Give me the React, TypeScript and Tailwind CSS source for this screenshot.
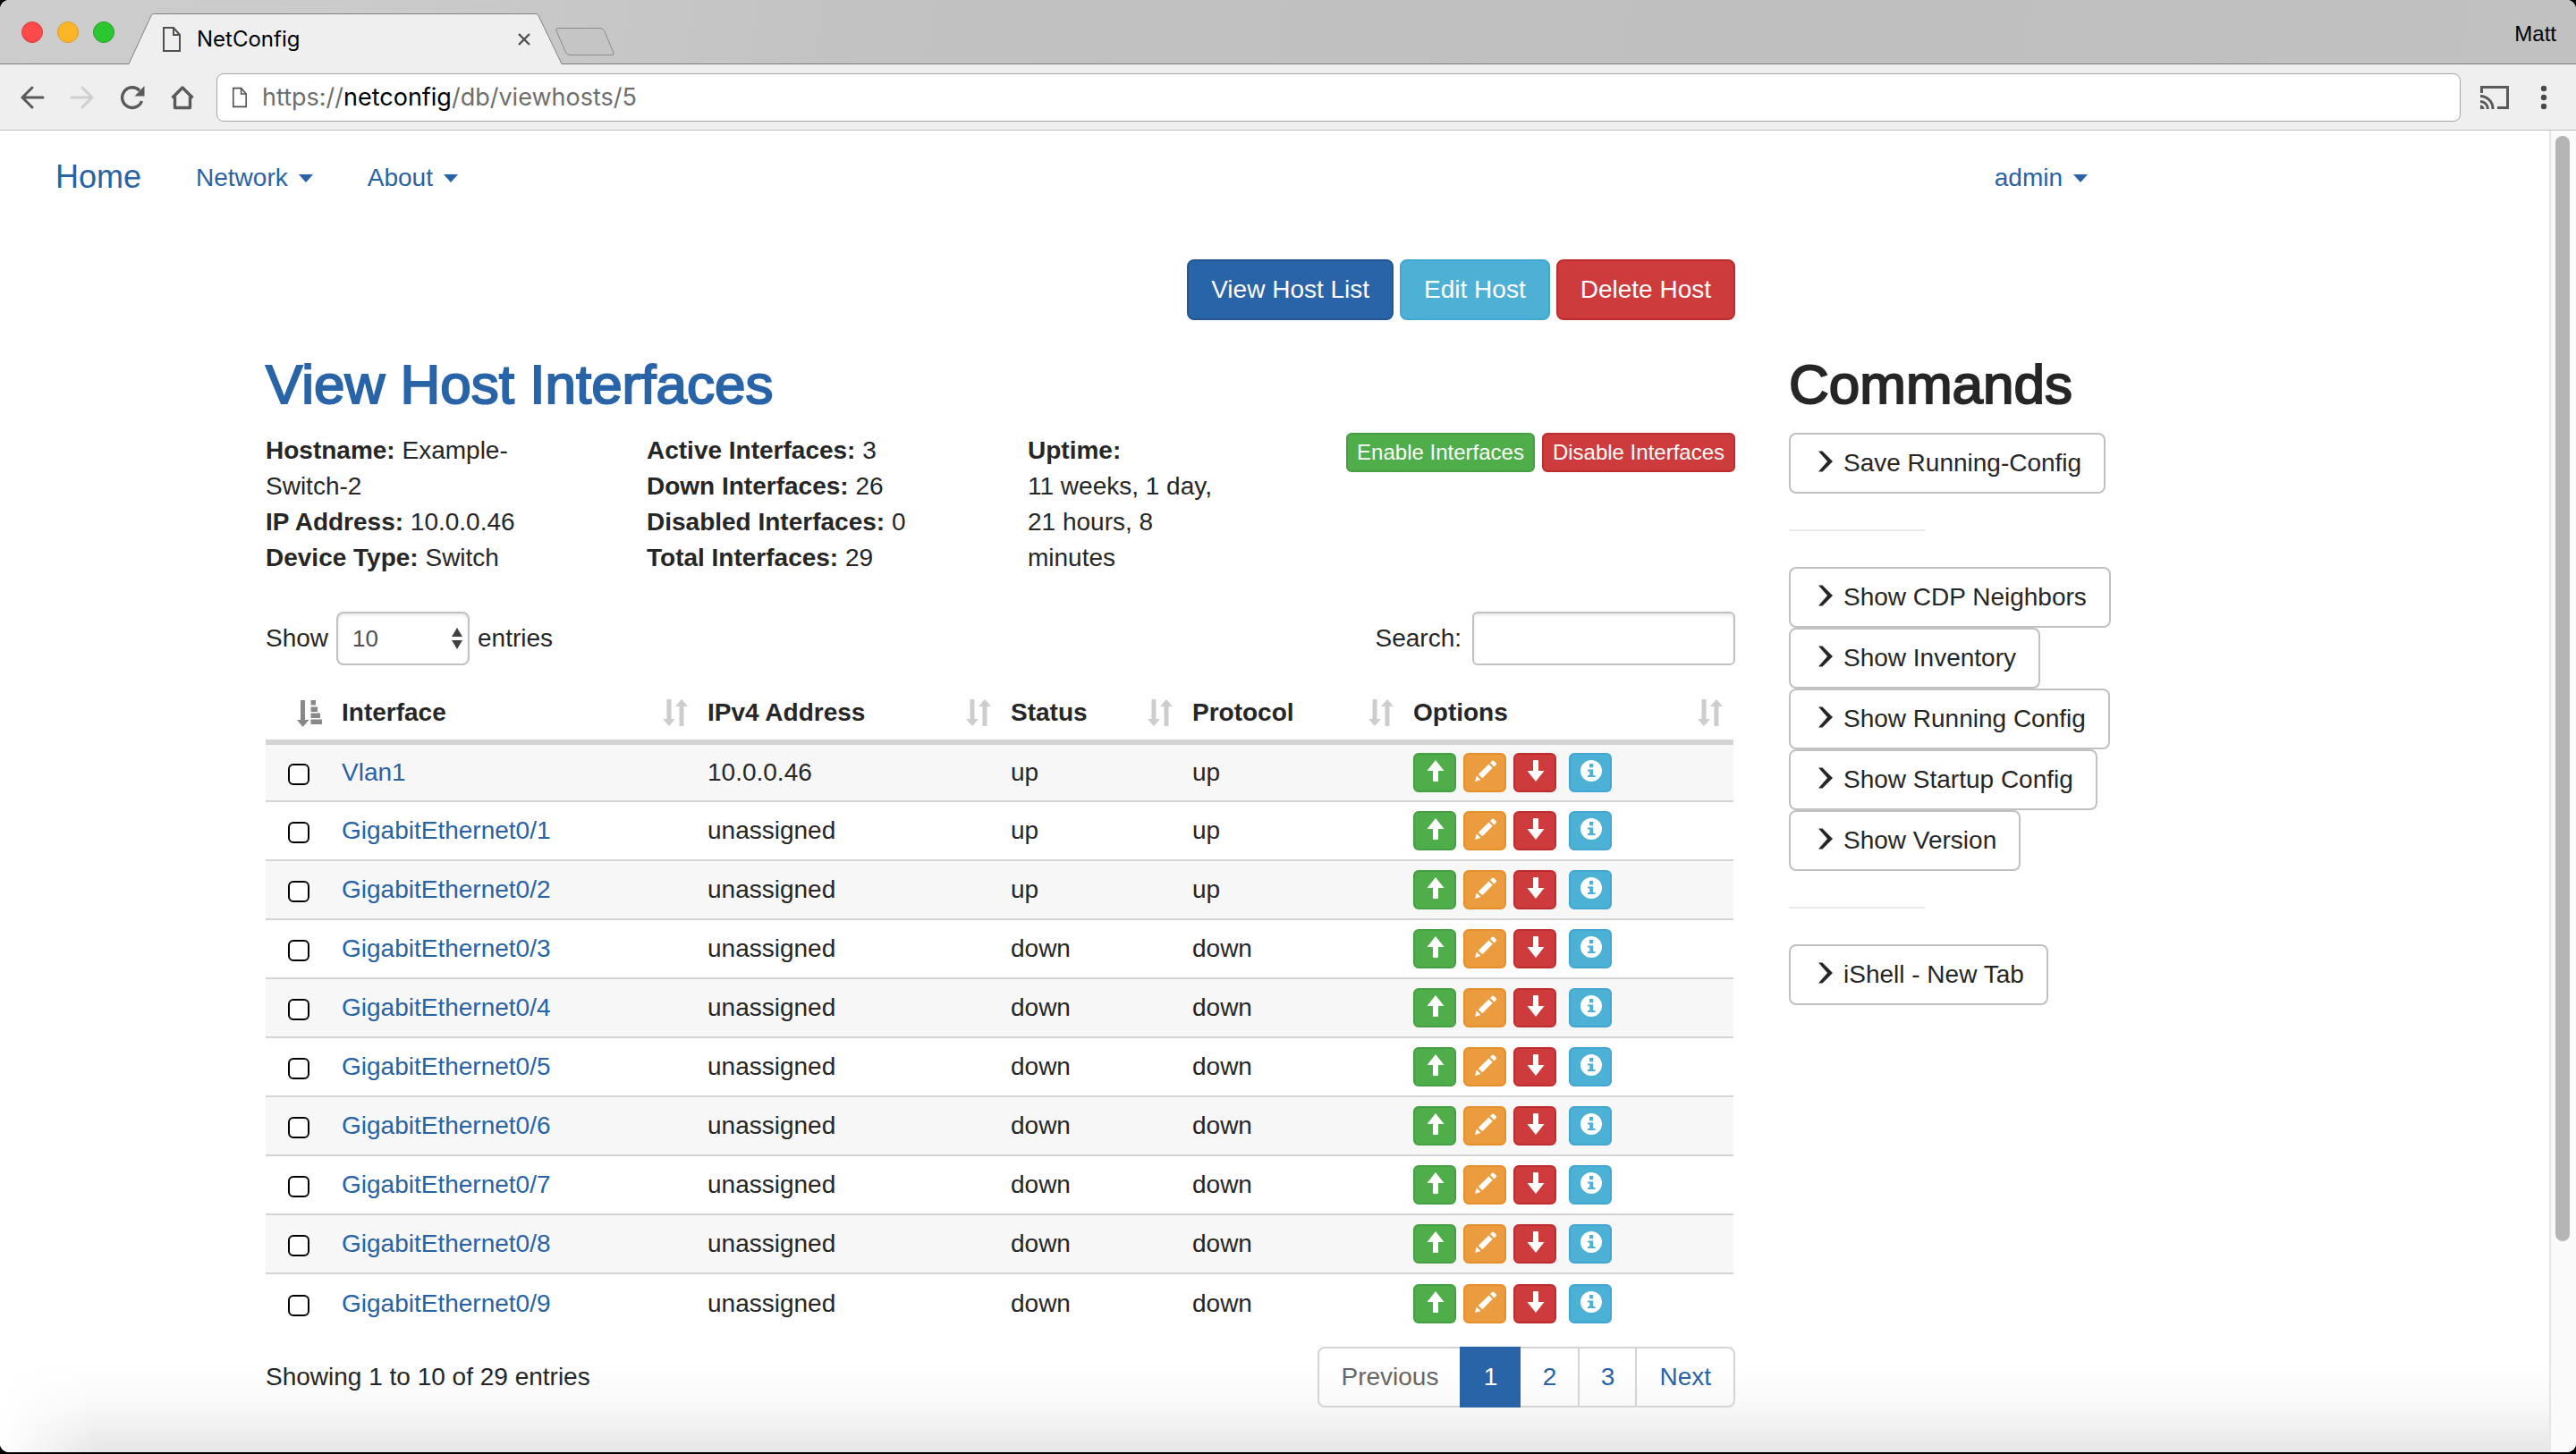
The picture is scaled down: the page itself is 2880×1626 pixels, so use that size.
import React from "react";

const bodyFont = "font-['Liberation_Sans',Arial,sans-serif]";
const chromeFont = "font-['Inter',sans-serif]";

function PageIcon({ className }: { className: string }) {
  return (
    <svg viewBox="0 0 20 28" className={className} fill="none" stroke="#505050" strokeWidth="2" aria-hidden="true">
      <path d="M1 1h11l7 8v18H1z" />
      <path d="M12 1v8h7" />
    </svg>
  );
}

function TitleBar() {
  return (
    <header className="flex h-[72px] shrink-0 items-end bg-[linear-gradient(100deg,#cdcdcd_0%,#cbcbcb_14%,#c2c2c2_34%,#bfbfbf_70%,#c1c1c1_100%)] shadow-[inset_0_-1px_0_#7c7c7c]">
      <div className="flex w-[144px] shrink-0 gap-4 self-start pt-6 pl-6">
        <button aria-label="Close window" className="size-6 rounded-full border border-[#df3b3d] bg-[#fc4a4a]" />
        <button aria-label="Minimize window" className="size-6 rounded-full border border-[#d79a29] bg-[#fdb528]" />
        <button aria-label="Zoom window" className="size-6 rounded-full border border-[#25a02a] bg-[#2bc732]" />
      </div>
      <div className="relative flex h-[57px] w-[484px] shrink-0 items-center pr-[35px] pl-[38px]">
        <svg viewBox="0 0 484 57" className="absolute inset-0 size-full" aria-hidden="true">
          <path d="M0 56.5 25 2.5Q26 .5 28 .5H455Q457 .5 458 2.5L484 56.5V57H0Z" fill="#efefef" />
          <path d="M0 56.5 25 2.5Q26 .5 28 .5H455Q457 .5 458 2.5L484 56.5" fill="none" stroke="#828282" />
        </svg>
        <PageIcon className="relative h-7 w-5" />
        <span className={"relative flex-1 pl-[18px] text-[24px] leading-7 text-black " + chromeFont}>NetConfig</span>
        <button aria-label="Close tab" className="relative">
          <svg viewBox="0 0 14 14" className="size-[14px]" stroke="#505050" strokeWidth="2.4" aria-hidden="true">
            <path d="M1 1l12 12M13 1 1 13" />
          </svg>
        </button>
      </div>
      <button aria-label="New tab" className="mb-[9px] -ml-[7px]">
        <svg viewBox="0 0 66 32" className="h-8 w-[66px]" fill="#c5c5c5" stroke="#8b8b8b" aria-hidden="true">
          <path d="M3 .5H50Q53 .5 54.500 3.500L65 28Q66 30.500 63 30.500H16Q13 30.500 11.500 27.500L1 3.500Q0 .5 3 .5Z" />
        </svg>
      </button>
      <span className={"ml-auto self-start pt-5 pr-[22px] text-[24px] leading-9 text-black " + bodyFont}>Matt</span>
    </header>
  );
}

function Toolbar() {
  return (
    <div className="flex h-[74px] shrink-0 items-center border-b border-[#c2c2c2] bg-[#efefef] pr-[29px] pl-[22px]">
      <div className="flex w-[220px] shrink-0 items-center gap-7">
        <button aria-label="Back">
          <svg viewBox="0 0 28 28" className="size-7" fill="none" stroke="#5a5a5a" strokeWidth="3" strokeLinecap="round" aria-hidden="true">
            <path d="M26 14H3M14 3 3 14l11 11" />
          </svg>
        </button>
        <button aria-label="Forward">
          <svg viewBox="0 0 28 28" className="size-7" fill="none" stroke="#cfcfcf" strokeWidth="3" strokeLinecap="round" aria-hidden="true">
            <path d="M2 14h23M14 3l11 11-11 11" />
          </svg>
        </button>
        <button aria-label="Reload">
          <svg viewBox="0 0 28 28" className="size-7" fill="none" stroke="#5a5a5a" strokeWidth="3.4" aria-hidden="true">
            <path d="M24.500 18A11.300 11.300 0 1 1 22 6.200" />
            <path d="M27.500 1v11.500H16.500z" fill="#5a5a5a" stroke="none" />
          </svg>
        </button>
        <button aria-label="Home page">
          <svg viewBox="0 0 28 28" className="size-7" fill="none" stroke="#5a5a5a" strokeWidth="3.400" strokeLinejoin="round" aria-hidden="true">
            <path d="M2.500 14.500 14 3l11.500 11.500M5.500 13v12.500h17V13" />
          </svg>
        </button>
      </div>
      <div className="flex h-[54px] min-w-0 flex-1 items-center rounded-lg border border-[#a6a6a6] bg-white pl-[17px]">
        <PageIcon className="h-6 w-4" />
        <a href="#address" className={"pl-[17px] text-[27px] leading-9 text-[#6e6e6e] " + chromeFont}>
          https://<span className="text-black">netconfig</span>/db/viewhosts/5
        </a>
      </div>
      <button aria-label="Cast" className="ml-[21px]">
        <svg viewBox="0 0 34 28" className="h-7 w-[34px]" fill="none" stroke="#5a5a5a" strokeWidth="3" aria-hidden="true">
          <path d="M2.500 9V2.500h29v23H20" />
          <path d="M1 12.500A14 14 0 0 1 15 27M1 18.500A8.500 8.500 0 0 1 9.500 27" />
          <path d="M1 22.500A4.500 4.500 0 0 1 5.500 27H1z" fill="#5a5a5a" stroke="none" />
        </svg>
      </button>
      <button aria-label="Browser menu" className="ml-[31px]">
        <svg viewBox="0 0 14 28" className="h-7 w-[14px]" fill="#4a4a4a" aria-hidden="true">
          <circle cx="7" cy="4" r="3.200" />
          <circle cx="7" cy="14" r="3.200" />
          <circle cx="7" cy="24" r="3.200" />
        </svg>
      </button>
    </div>
  );
}

function NavMenu({ label }: { label: string }) {
  return (
    <button className="flex items-center gap-3 pt-0.5 leading-10 text-[#2863a6]">
      {label}
      <svg viewBox="0 0 16 9" className="h-[9px] w-4" fill="currentColor" aria-hidden="true">
        <path d="M0 0h16L8 9z" />
      </svg>
    </button>
  );
}

function UnsortedIcon() {
  return (
    <svg viewBox="0 0 28 30" className="h-[30px] w-7 shrink-0" fill="#cdcdcd" aria-hidden="true">
      <path d="M4.500 0h5v22H14L7 30 0 22h4.500z" />
      <path d="M18.500 30h5V8H28L21 0l-7 8h4.500z" />
    </svg>
  );
}

function SortedIcon() {
  return (
    <svg viewBox="0 0 28 30" className="h-[30px] w-7 shrink-0" fill="#888" aria-hidden="true">
      <path d="M4 0h5v22h4.500L6.500 30 0 22h4z" />
      <path d="M15.500 0H21v5.500h-5.500zM15.500 7.500H23V13h-7.500zM15.500 14.500H26V20H15.500zM15.500 21.500H28v5.500H15.500z" />
    </svg>
  );
}

const glyphs: Record<string, React.ReactNode> = {
  up: <path d="M12 0l9.500 12h-6.500v11q0 1-1 1h-4q-1 0-1-1V12H2.500z" />,
  down: <path d="M12 24l9.500-12h-6.500V1q0-1-1-1h-4q-1 0-1 1v11H2.500z" />,
  edit: (
    <path d="M0 24l1.800-6.500L6.500 22zM3.800 16 15.500 4.500l4.200 4.200L8.300 20.300zM17 3l2-2q1-1 2.200 0l2.300 2.300q1 1 0 2.200l-2 2z" />
  ),
  info: (
    <path
      fillRule="evenodd"
      d="M12 0a12 12 0 1 0 0 24 12 12 0 0 0 0-24zM10 4h4.200v4.200H10zM8 10.500h6.200v6.500H16.500v2H8v-2h2.200v-4.500H8z"
    />
  ),
};

function OptionButton({ glyph, label, color }: { glyph: string; label: string; color: string }) {
  return (
    <button aria-label={label} className={"flex h-11 w-12 items-start justify-center rounded-md border-2 pt-1.5 pl-0.5 text-white " + color}>
      <svg viewBox="0 0 24 24" className="size-6" fill="currentColor" aria-hidden="true">
        {glyphs[glyph]}
      </svg>
    </button>
  );
}

const green = "border-[#469f43] bg-[#4fae4a]";
const orange = "border-[#e6902b] bg-[#ea9c3e]";
const red = "border-[#bd2d30] bg-[#cd3b3c]";
const blue = "border-[#235692] bg-[#2864a7]";
const cyan = "border-[#41a7d0] bg-[#4db1d6]";

const rows = [
  ["Vlan1", "10.0.0.46", "up"],
  ["GigabitEthernet0/1", "unassigned", "up"],
  ["GigabitEthernet0/2", "unassigned", "up"],
  ["GigabitEthernet0/3", "unassigned", "down"],
  ["GigabitEthernet0/4", "unassigned", "down"],
  ["GigabitEthernet0/5", "unassigned", "down"],
  ["GigabitEthernet0/6", "unassigned", "down"],
  ["GigabitEthernet0/7", "unassigned", "down"],
  ["GigabitEthernet0/8", "unassigned", "down"],
  ["GigabitEthernet0/9", "unassigned", "down"],
];

function Fact({ label, value }: { label: string; value: React.ReactNode }) {
  return (
    <p>
      <b>{label}</b> {value}
    </p>
  );
}

function InterfaceTable() {
  return (
    <div className="pt-4 pr-0.5">
      <table className="w-full table-fixed border-collapse text-left">
        <colgroup>
          <col className="w-[69px]" />
          <col />
          <col className="w-[339px]" />
          <col className="w-[203px]" />
          <col className="w-[247px]" />
          <col className="w-[374px]" />
        </colgroup>
        <thead>
          <tr className="h-[70px] border-b-[6px] border-[#d4d4d4]">
            <th className="pt-2 pr-1.5">
              <div className="flex justify-end">
                <SortedIcon />
              </div>
            </th>
            {["Interface", "IPv4 Address", "Status", "Protocol", "Options"].map((name) => (
              <th key={name} className="pt-1.5 pr-1.5 pl-4 last:pr-3">
                <div className="flex items-center justify-between">
                  {name}
                  <UnsortedIcon />
                </div>
              </th>
            ))}
          </tr>
        </thead>
        <tbody>
          {rows.map(([name, address, state]) => (
            <tr key={name} className="h-[66px] border-b-2 border-[#d4d4d4] odd:bg-[#f7f7f7] last:border-b-0">
              <td className="pt-1 pl-[25px]">
                <input
                  type="checkbox"
                  aria-label={"Select " + name}
                  className="block size-6 appearance-none rounded-md border-2 border-black bg-white"
                />
              </td>
              <td className="pl-4">
                <a href="#interface" className="text-[#2863a6]">
                  {name}
                </a>
              </td>
              <td className="pl-4">{address}</td>
              <td className="pl-4">{state}</td>
              <td className="pl-4">{state}</td>
              <td className="pl-4">
                <div className="flex gap-2">
                  <OptionButton glyph="up" label={"Enable " + name} color={green} />
                  <OptionButton glyph="edit" label={"Edit " + name} color={orange} />
                  <OptionButton glyph="down" label={"Disable " + name} color={red} />
                  <div className="pl-1.5">
                    <OptionButton glyph="info" label={"Details of " + name} color={cyan} />
                  </div>
                </div>
              </td>
            </tr>
          ))}
        </tbody>
      </table>
    </div>
  );
}

function CommandButton({ label }: { label: string }) {
  return (
    <button className="flex h-[68px] items-center rounded-lg border-2 border-[#c1c1c1] bg-white pr-[25px] pl-[31px] whitespace-nowrap">
      <svg viewBox="0 0 16 24" className="mr-3 mb-1 h-6 w-4" fill="currentColor" aria-hidden="true">
        <path d="M0 .5h4.500L16 12 4.500 23.500H0L10 12z" />
      </svg>
      {label}
    </button>
  );
}

const bigButton = "h-[68px] rounded-lg border-2 px-[25px] text-white ";
const smallButton = "h-11 rounded-md border-2 px-2.5 text-[24px] leading-9 text-white ";

export default function App() {
  return (
    <div className="flex min-h-screen flex-col bg-black pb-0.5">
      <div className={"flex flex-1 flex-col overflow-hidden rounded-[10px] bg-white text-[28px] leading-10 text-[#262626] " + bodyFont}>
        <TitleBar />
        <Toolbar />
        <div className="flex flex-1">
          <div className="flex-1 bg-[linear-gradient(to_right,white_0px,transparent_110px),linear-gradient(to_top,#e6e6e6_0px,#f8f8f8_50px,white_100px)] bg-no-repeat">
            <nav className="flex h-[104px] items-center pr-[516px] pl-[62px]">
              <a href="#home" className="pr-[61px] text-[36px] text-[#2863a6]">
                Home
              </a>
              <NavMenu label="Network" />
              <div className="pl-[61px]">
                <NavMenu label="About" />
              </div>
              <div className="ml-auto">
                <NavMenu label="admin" />
              </div>
            </nav>
            <div className="flex pt-10 pl-[297px]">
              <main className="max-w-[1643px] flex-1">
                <div className="flex justify-end gap-[7px]">
                  <button className={bigButton + blue}>View Host List</button>
                  <button className={bigButton + cyan}>Edit Host</button>
                  <button className={bigButton + red}>Delete Host</button>
                </div>
                <h1 className="pt-[38px] text-[62px] leading-[68px] text-[#2864a7] [-webkit-text-stroke:2px_#2864a7]">
                  View Host Interfaces
                </h1>
                <div className="flex pt-5">
                  <div className="w-[426px] pr-[120px]">
                    <Fact
                      label="Hostname:"
                      value={
                        <>
                          Example-
                          <wbr />
                          Switch-2
                        </>
                      }
                    />
                    <Fact label="IP Address:" value="10.0.0.46" />
                    <Fact label="Device Type:" value="Switch" />
                  </div>
                  <div className="w-[426px]">
                    <Fact label="Active Interfaces:" value="3" />
                    <Fact label="Down Interfaces:" value="26" />
                    <Fact label="Disabled Interfaces:" value="0" />
                    <Fact label="Total Interfaces:" value="29" />
                  </div>
                  <div className="w-[225px]">
                    <b className="block">Uptime:</b>
                    11 weeks, 1 day, 21 hours, 8 minutes
                  </div>
                  <div className="ml-auto flex gap-2">
                    <button className={smallButton + green}>Enable Interfaces</button>
                    <button className={smallButton + red}>Disable Interfaces</button>
                  </div>
                </div>
                <div className="flex items-center justify-between pt-10">
                  <div className="flex items-center gap-[9px]">
                    <label htmlFor="page-size">Show</label>
                    <div className="relative">
                      <select
                        id="page-size"
                        className="block h-[60px] w-[149px] appearance-none rounded-lg border-2 border-[#c1c1c1] bg-white pl-4 text-[26px] text-[#505050] shadow-[inset_0_2px_3px_#e6e6e6]"
                      >
                        <option>10</option>
                        <option>25</option>
                      </select>
                      <svg viewBox="0 0 12 24" className="pointer-events-none absolute top-[18px] right-2 h-6 w-3" fill="#404040" aria-hidden="true">
                        <path d="M0 10 6 0l6 10zM0 14h12L6 24z" />
                      </svg>
                    </div>
                    <label htmlFor="page-size">entries</label>
                  </div>
                  <div className="flex items-center gap-3">
                    <label htmlFor="search">Search:</label>
                    <input
                      id="search"
                      type="text"
                      className="h-[60px] w-[294px] rounded-md border-2 border-[#c1c1c1] bg-white px-4 shadow-[inset_0_2px_3px_#e6e6e6]"
                    />
                  </div>
                </div>
                <InterfaceTable />
                <div className="flex items-center justify-between pt-4">
                  <p>Showing 1 to 10 of 29 entries</p>
                  <div className="flex h-[68px] rounded-lg border-2 border-[#d4d4d4] text-[#2863a6]">
                    <button className="px-6 text-[#676767]">Previous</button>
                    <button className="-my-0.5 w-[68px] bg-[#2864a7] text-white">1</button>
                    <button className="w-16">2</button>
                    <button className="w-[66px] border-x-2 border-[#d4d4d4]">3</button>
                    <button className="px-[25px]">Next</button>
                  </div>
                </div>
              </main>
              <aside className="flex w-[500px] shrink-0 flex-col items-start pt-[106px] pl-[60px]">
                <h2 className="pb-5 text-[62px] leading-[68px] [-webkit-text-stroke:2px_#262626]">Commands</h2>
                <CommandButton label="Save Running-Config" />
                <hr className="my-10 w-[152px] border-t-2 border-[#e8e8e8]" />
                <CommandButton label="Show CDP Neighbors" />
                <CommandButton label="Show Inventory" />
                <CommandButton label="Show Running Config" />
                <CommandButton label="Show Startup Config" />
                <CommandButton label="Show Version" />
                <hr className="my-10 w-[152px] border-t-2 border-[#e8e8e8]" />
                <CommandButton label="iShell - New Tab" />
              </aside>
            </div>
          </div>
          <div className="w-[30px] shrink-0 border-l-2 border-[#e6e6e6] bg-[#fafafa] pt-1.5 pl-[5px]">
            <div className="h-[84%] w-4 rounded-full bg-[#b5b5b5]" />
          </div>
        </div>
      </div>
    </div>
  );
}
